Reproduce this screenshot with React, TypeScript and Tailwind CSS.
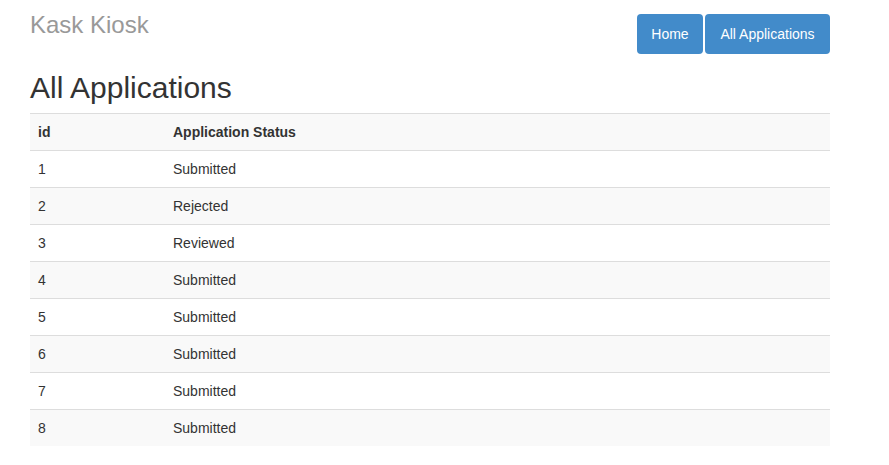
import React from "react";

const applications = [
	{ id: 1, status: "Submitted" },
	{ id: 2, status: "Rejected" },
	{ id: 3, status: "Reviewed" },
	{ id: 4, status: "Submitted" },
	{ id: 5, status: "Submitted" },
	{ id: 6, status: "Submitted" },
	{ id: 7, status: "Submitted" },
	{ id: 8, status: "Submitted" },
];

const App = () => {
	return (
		<div
			className="min-h-screen bg-white text-[#333] text-[14px]"
			style={{ fontFamily: '"Liberation Sans", Arial, sans-serif' }}
		>
			<div className="w-[800px] ml-[30px]">
				{/*Header && Nav Buttons*/}
				<div className="flex justify-between items-start">
					<h3 className="mt-[12px] text-[24px] leading-[26.4px] text-[#999]">Kask Kiosk</h3>
					<div className="flex gap-[2px] mt-[14px]">
						<button className="w-[66px] h-10 rounded-[4px] bg-[#428bca] text-white text-[14px]">
							Home
						</button>
						<button className="w-[125px] h-10 rounded-[4px] bg-[#428bca] text-white text-[14px]">
							All Applications
						</button>
					</div>
				</div>
				<h1 className="mt-[17px] mb-[9px] text-[30px] leading-[33px] text-[#333]">All Applications</h1>
				{/*Applications Table*/}
				<table className="w-full border-collapse">
					<tbody>
						<tr className="bg-[#f9f9f9] border-t border-[#ddd]">
							<th className="w-[135px] px-2 py-2 leading-5 text-left font-bold">id</th>
							<th className="px-2 py-2 leading-5 text-left font-bold">Application Status</th>
						</tr>
						{applications.map((app) => (
							<tr
								key={app.id}
								className={`border-t border-[#ddd] ${app.id % 2 === 0 ? "bg-[#f9f9f9]" : "bg-white"}`}
							>
								<td className="px-2 py-2 leading-5">{app.id}</td>
								<td className="px-2 py-2 leading-5">{app.status}</td>
							</tr>
						))}
					</tbody>
				</table>
			</div>
		</div>
	);
};

export default App;
